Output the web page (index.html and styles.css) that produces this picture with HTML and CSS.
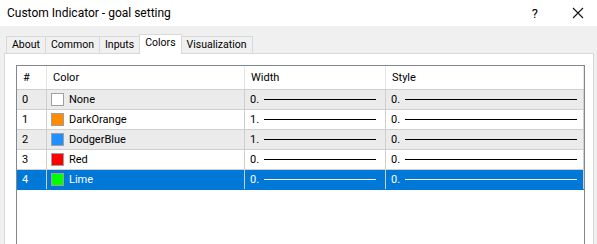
FILE: index.html
```html
<!DOCTYPE html>
<html lang="en">
<head>
    <meta charset="UTF-8">
    <meta name="viewport" content="width=device-width, initial-scale=1.0">
    <title>Custom Indicator - goal setting</title>
    <link rel="stylesheet" href="styles.css">
</head>
<body>
    <div class="titlebar">
        <div class="title">Custom Indicator - goal setting</div>
        <div class="title-buttons">
            <span class="help">?</span>
            <svg class="close" width="12" height="12" viewBox="0 0 12 12">
                <path d="M1 1 L11 11 M11 1 L1 11" stroke="#111" stroke-width="1.1" fill="none"/>
            </svg>
        </div>
    </div>

    <div class="dialog">
        <div class="tabs">
            <div class="tab">About</div>
            <div class="tab">Common</div>
            <div class="tab">Inputs</div>
            <div class="tab active">Colors</div>
            <div class="tab">Visualization</div>
        </div>

        <div class="panel">
            <div class="list">
                <div class="row header">
                    <div class="cell">#</div>
                    <div class="cell">Color</div>
                    <div class="cell">Width</div>
                    <div class="cell">Style</div>
                </div>
                <div class="row odd">
                    <div class="cell num">0</div>
                    <div class="cell"><span class="swatch" style="background:#ffffff"></span>None</div>
                    <div class="cell">0.<span class="line w"></span></div>
                    <div class="cell">0.<span class="line s"></span></div>
                </div>
                <div class="row">
                    <div class="cell num">1</div>
                    <div class="cell"><span class="swatch" style="background:#ff8c00"></span>DarkOrange</div>
                    <div class="cell">1.<span class="line w"></span></div>
                    <div class="cell">0.<span class="line s"></span></div>
                </div>
                <div class="row odd">
                    <div class="cell num">2</div>
                    <div class="cell"><span class="swatch" style="background:#1e90ff"></span>DodgerBlue</div>
                    <div class="cell">1.<span class="line w"></span></div>
                    <div class="cell">0.<span class="line s"></span></div>
                </div>
                <div class="row">
                    <div class="cell num">3</div>
                    <div class="cell"><span class="swatch" style="background:#ff0000"></span>Red</div>
                    <div class="cell">0.<span class="line w"></span></div>
                    <div class="cell">0.<span class="line s"></span></div>
                </div>
                <div class="row selected">
                    <div class="cell num">4</div>
                    <div class="cell"><span class="swatch" style="background:#00ff00"></span>Lime</div>
                    <div class="cell">0.<span class="line w"></span></div>
                    <div class="cell">0.<span class="line s"></span></div>
                </div>
            </div>
        </div>
    </div>
</body>
</html>
```

FILE: styles.css
```css
body {
    font-family: Roboto, "Liberation Sans", sans-serif;
    font-size: 11px;
    color: #000;
    background-color: #f0f0f0;
    margin: 0;
    padding: 0;
    height: 100vh;
    overflow: hidden;
    display: flex;
    flex-direction: column;
}
.titlebar {
    height: 26px;
    flex-shrink: 0;
    background-color: #fff;
    display: flex;
    align-items: center;
    justify-content: space-between;
}
.title {
    font-size: 12px;
    padding-left: 7px;
    padding-bottom: 1px;
}
.title-buttons {
    display: flex;
    align-items: center;
    padding-right: 13px;
}
.help {
    font-size: 13px;
    margin-right: 34px;
}
.dialog {
    flex: 1;
    display: flex;
    flex-direction: column;
    padding-top: 7px;
    min-height: 0;
}
.tabs {
    display: flex;
    align-items: flex-end;
    height: 20px;
    flex-shrink: 0;
    padding-left: 6px;
}
.tab {
    height: 17px;
    line-height: 16px;
    padding: 0 5px;
    font-size: 10.5px;
    border: 1px solid #d9d9d9;
    border-bottom: none;
    border-right: none;
    box-sizing: border-box;
    background-color: #f0f0f0;
}
.tab:last-child {
    border-right: 1px solid #d9d9d9;
}
.tab.active {
    height: 20px;
    line-height: 16px;
    background-color: #fff;
    border-right: 1px solid #d9d9d9;
    margin-bottom: -1px;
    position: relative;
    z-index: 1;
}
.tab.active + .tab {
    border-left: none;
}
.panel {
    flex: 1;
    min-height: 0;
    margin: 0 3px 0 4px;
    background-color: #fff;
    border: 1px solid #d9d9d9;
    border-bottom: none;
    padding: 11px 8px 0 11px;
    display: flex;
}
.list {
    width: 567px;
    border: 1px solid #828790;
    border-bottom: none;
}
.row {
    display: grid;
    grid-template-columns: 30px 198px 141px 198px;
    height: 20px;
    border-bottom: 1px solid #cfcfcf;
    box-sizing: border-box;
}
.row.odd {
    background-color: #ebebeb;
}
.row.header {
    height: 24px;
    background-color: #fff;
}
.cell {
    display: flex;
    align-items: center;
    padding-left: 5px;
    border-right: 1px solid #cfcfcf;
    white-space: nowrap;
}
.header .cell {
    padding-left: 6px;
    border-right-color: #e5e5e5;
}
.row.selected {
    background-color: #0078d7;
    color: #fff;
    border-bottom-color: #0078d7;
}
.row.selected .cell {
    border-right-color: #cfcfcf;
}
.swatch {
    display: inline-block;
    width: 11px;
    height: 11px;
    border: 1px solid #a0a0a0;
    margin: 0 5px 0 -1px;
}
.line {
    display: inline-block;
    height: 1px;
    background-color: #000;
    margin-left: 5px;
}
.line.w {
    width: 112px;
}
.line.s {
    width: 172px;
}
.selected .line {
    background-color: #fff;
}
```
